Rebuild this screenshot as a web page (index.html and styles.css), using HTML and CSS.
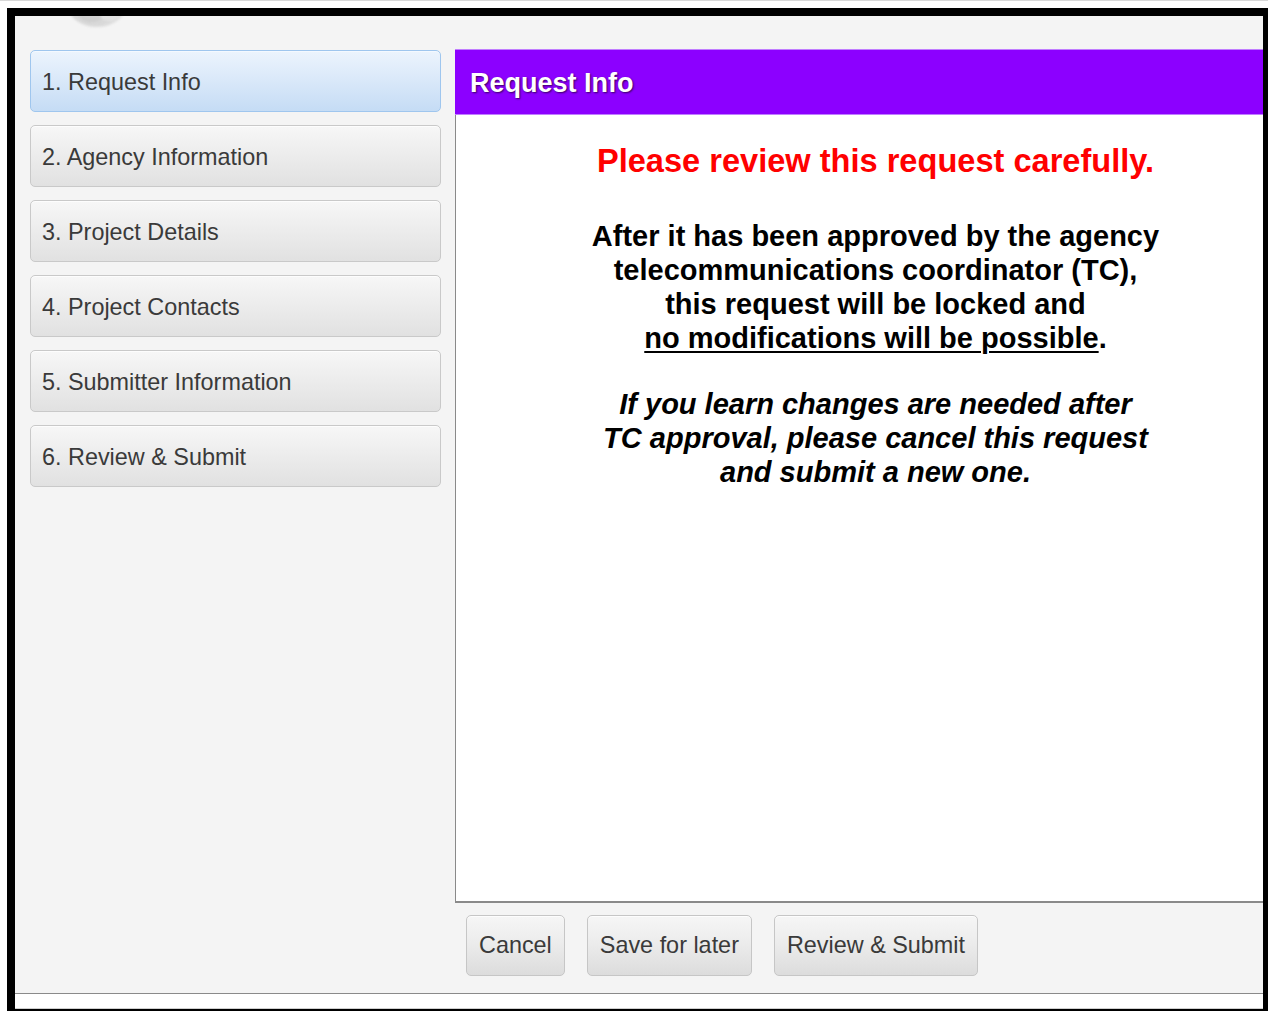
FILE: index.html
```html
<!DOCTYPE html>
<html lang="en">
<head>
<meta charset="utf-8">
<title>Request Info</title>
<link rel="stylesheet" href="styles.css">
</head>
<body>
<div class="frame">
  <div class="inner">
    <div class="brand">
      <svg class="brand-logo" width="64" height="44" viewBox="0 0 64 44" aria-hidden="true">
        <defs>
          <radialGradient id="lg" cx="0.45" cy="0.55" r="0.6">
            <stop offset="0" stop-color="#f2f2f2"/>
            <stop offset="0.55" stop-color="#d6d6d6"/>
            <stop offset="1" stop-color="#bdbdbd" stop-opacity="0"/>
          </radialGradient>
        </defs>
        <ellipse cx="30" cy="22" rx="29" ry="21" fill="url(#lg)"/>
        <ellipse cx="24" cy="30" rx="12" ry="8" fill="#c8c8c8" opacity="0.6"/>
        <ellipse cx="42" cy="31" rx="9" ry="6" fill="#e6e6e6" opacity="0.8"/>
      </svg>
    </div>

    <div class="layout">
      <nav class="steps">
        <div class="step step-active">1. Request Info</div>
        <div class="step">2. Agency Information</div>
        <div class="step">3. Project Details</div>
        <div class="step">4. Project Contacts</div>
        <div class="step">5. Submitter Information</div>
        <div class="step">6. Review &amp; Submit</div>
      </nav>

      <section class="main">
        <div class="panel">
          <h1 class="panel-title">Request Info</h1>
          <div class="panel-body">
            <p class="warning">Please review this request carefully.</p>
            <p class="notice">After it has been approved by the agency<br>
              telecommunications coordinator (TC),<br>
              this request will be locked and<br>
              <u>no modifications will be possible</u>.</p>
            <p class="notice notice-italic">If you learn changes are needed after<br>
              TC approval, please cancel this request<br>
              and submit a new one.</p>
          </div>
        </div>
        <div class="actions">
          <button class="btn" type="button">Cancel</button>
          <button class="btn" type="button">Save for later</button>
          <button class="btn" type="button">Review &amp; Submit</button>
        </div>
      </section>
    </div>

    <div class="footer"></div>
  </div>
</div>
</body>
</html>
```

FILE: styles.css
```css
* {
  box-sizing: border-box;
}

html, body {
  margin: 0;
  padding: 0;
  background: #ffffff;
  font-family: "Liberation Sans", Arial, sans-serif;
}

body {
  width: 1268px;
  height: 1011px;
  overflow: hidden;
  border-top: 1px solid #d8d8d8;
}

/* dark outer frame */
.frame {
  margin: 7px 0 0 7px;
  width: 1261px;
  height: 1003px;
  border-style: solid;
  border-color: #000;
  border-width: 8px 5px 2px 8px;
  overflow: hidden;
}

.inner {
  width: 1248px;
  height: 993px;
  background: #f4f4f4;
  display: flex;
  flex-direction: column;
  overflow: hidden;
}

.brand {
  height: 33px;
  flex: none;
  padding-left: 52px;
  overflow: hidden;
}

.brand-logo {
  display: block;
  margin-top: -32px;
  filter: blur(1px);
}

.layout {
  display: flex;
  align-items: flex-start;
  padding-left: 15px;
  gap: 14px;
  flex: none;
  height: 944px;
}

/* step navigation */
.steps {
  width: 411px;
  flex: none;
  margin-top: 1px;
  display: flex;
  flex-direction: column;
  gap: 13px;
}

.step {
  height: 62px;
  padding: 2px 0 0 11px;
  display: flex;
  align-items: center;
  font-size: 23.4px;
  color: #3a3a3a;
  border: 1px solid #c9c9c9;
  border-radius: 5px;
  background: linear-gradient(#f7f7f7, #ededed 45%, #e1e1e1);
  box-shadow: inset 0 1px 0 #fdfdfd;
}

.step-active {
  border-color: #9fc6ee;
  background: linear-gradient(#ecf4fd, #d9e8f9 50%, #c5dcf5);
  box-shadow: inset 0 1px 0 #f4f9ff;
}

/* main form area */
.main {
  width: 840px;
  flex: none;
}

.panel-title {
  margin: 0;
  height: 66px;
  padding: 2px 0 0 15px;
  display: flex;
  align-items: center;
  background: #8c00ff;
  border-top: 1px solid #c07dff;
  border-bottom: 1px solid #c07dff;
  color: #fff;
  font-size: 27px;
  font-weight: bold;
  text-shadow: 1px 1px 2px #3a0060;
}

.panel-body {
  height: 788px;
  background: #fff;
  border-left: 1px solid #8a8a8a;
  border-bottom: 2px solid #8a8a8a;
  padding-top: 26px;
  text-align: center;
  color: #000;
}

.warning {
  margin: 0;
  line-height: 40px;
  font-size: 32.6px;
  font-weight: bold;
  color: #ff0000;
}

.notice {
  margin: 38px 0 0;
  line-height: 34px;
  font-size: 29px;
  font-weight: bold;
}

.notice u {
  text-decoration-thickness: 2px;
  text-underline-offset: 3px;
}

.notice-italic {
  margin-top: 32px;
  font-style: italic;
}

.actions {
  display: flex;
  gap: 22px;
  margin-top: 12px;
  padding-left: 11px;
}

.btn {
  height: 61px;
  padding: 0 12px;
  font-family: "Liberation Sans", Arial, sans-serif;
  font-size: 23.4px;
  color: #3a3a3a;
  border: 1px solid #c6c6c6;
  border-radius: 5px;
  background: linear-gradient(#f6f6f6, #ececec 45%, #dcdcdc);
  box-shadow: inset 0 1px 0 #fdfdfd;
  cursor: pointer;
}

.footer {
  flex: none;
  height: 16px;
  background: #fff;
  border-top: 1px solid #8a8a8a;
  border-bottom: 1px solid #cfcfcf;
}
```
